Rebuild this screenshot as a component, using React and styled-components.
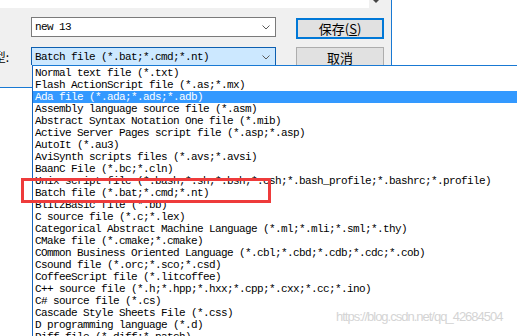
import styled, { createGlobalStyle } from "styled-components";

const Global = createGlobalStyle`
  html, body {
    margin: 0;
    padding: 0;
    background: #fff;
  }
`;

const Page = styled.div`
  position: relative;
  width: 517px;
  height: 336px;
  overflow: hidden;
  background: #fff;
  display: flex;
  flex-direction: column;
`;

const Top = styled.div`
  display: flex;
  height: 65px;
  flex-shrink: 0;
`;

const Dialog = styled.div`
  width: 391px;
  height: 65px;
  background: #f0f0f0;
  border-right: 1px solid #1979d3;
  overflow: hidden;
  display: flex;
  flex-direction: column;
`;

const ScrollEdge = styled.div`
  height: 8px;
  display: flex;
  align-items: flex-start;
  gap: 4px;
`;

const WhiteBar = styled.div`
  width: 369px;
  height: 8px;
  background: #fff;
`;

const FieldRow = styled.div`
  display: flex;
  align-items: flex-start;
  margin-top: ${(p) => p.$top}px;
`;

const Label = styled.div`
  width: 9px;
  margin-right: 22px;
  height: 19px;
  display: flex;
  justify-content: flex-end;
  align-items: center;
  overflow: hidden;
  white-space: nowrap;
  font: 12px "Noto Sans CJK SC", sans-serif;
  color: #000;
`;

const Combo = styled.div`
  box-sizing: border-box;
  width: 245px;
  height: 20px;
  display: flex;
  align-items: center;
  justify-content: space-between;
  padding: 0 5px 0 3px;
  background: ${(p) => (p.$focus ? "#cce8ff" : "#fff")};
  border: 1px solid ${(p) => (p.$focus ? "#0d5fb0" : "#7a7a7a")};
  font: 11px "Liberation Mono", monospace;
  letter-spacing: -0.6px;
  color: #000;
`;

const Button = styled.div`
  box-sizing: border-box;
  width: 88px;
  height: ${(p) => (p.$primary ? 21 : 20)}px;
  margin-left: 20px;
  margin-top: ${(p) => p.$offset || 0}px;
  display: flex;
  align-items: center;
  justify-content: center;
  background: #e1e1e1;
  border: ${(p) => (p.$primary ? "2px solid #0078d7" : "1px solid #adadad")};
  border-bottom-width: ${(p) => (p.$primary ? "2px" : "0")};
  font: 13px "Noto Sans CJK SC", sans-serif;
  color: #000;
  flex-shrink: 0;
`;

const Body = styled.div`
  display: flex;
  flex: 1;
  min-height: 0;
`;

const LeftStrip = styled.div`
  width: 32px;
  flex-shrink: 0;
  display: flex;
  flex-direction: column;
`;

const StripGray = styled.div`
  height: 22px;
  background: #f0f0f0;
  border-bottom: 1px solid #1979d3;
`;

const List = styled.ul`
  flex: 1;
  margin: 0;
  padding: 1px 0 0;
  list-style: none;
  border-top: 1px solid #1979d3;
  border-left: 1px solid #1565c0;
  background: #fff;
`;

const Item = styled.li`
  height: 12px;
  line-height: 12px;
  padding-left: 2px;
  white-space: nowrap;
  font: 11px/12px "Liberation Mono", monospace;
  letter-spacing: -0.6px;
  color: ${(p) => (p.$selected ? "#fff" : "#000")};
  background: ${(p) => (p.$selected ? "#3399ff" : "transparent")};
`;

const Marker = styled.div`
  position: absolute;
  left: 21px;
  top: 178px;
  width: 250px;
  height: 25px;
  box-sizing: border-box;
  border: 3px solid #ee3b3b;
`;

const Watermark = styled.div`
  position: absolute;
  left: 336px;
  top: 309px;
  font: 13px "Liberation Sans", Arial, sans-serif;
  letter-spacing: -1px;
  color: #d4d4d4;
  white-space: nowrap;
`;

const Chevron = () => (
  <svg width="8" height="5" viewBox="0 0 8 5">
    <path d="M0.5 0.5 L4 4 L7.5 0.5" fill="none" stroke="#5a5a5a" strokeWidth="1" />
  </svg>
);

const TinyArrow = () => (
  <svg width="6" height="4" viewBox="0 0 6 4">
    <path d="M0 0 H6 L3 3 Z" fill="#444" />
  </svg>
);

const types = [
  "Normal text file (*.txt)",
  "Flash ActionScript file (*.as;*.mx)",
  "Ada file (*.ada;*.ads;*.adb)",
  "Assembly language source file (*.asm)",
  "Abstract Syntax Notation One file (*.mib)",
  "Active Server Pages script file (*.asp;*.asp)",
  "AutoIt (*.au3)",
  "AviSynth scripts files (*.avs;*.avsi)",
  "BaanC File (*.bc;*.cln)",
  "Unix script file (*.bash;*.sh;*.bsh;*.csh;*.bash_profile;*.bashrc;*.profile)",
  "Batch file (*.bat;*.cmd;*.nt)",
  "BlitzBasic file (*.bb)",
  "C source file (*.c;*.lex)",
  "Categorical Abstract Machine Language (*.ml;*.mli;*.sml;*.thy)",
  "CMake file (*.cmake;*.cmake)",
  "COmmon Business Oriented Language (*.cbl;*.cbd;*.cdb;*.cdc;*.cob)",
  "Csound file (*.orc;*.sco;*.csd)",
  "CoffeeScript file (*.litcoffee)",
  "C++ source file (*.h;*.hpp;*.hxx;*.cpp;*.cxx;*.cc;*.ino)",
  "C# source file (*.cs)",
  "Cascade Style Sheets File (*.css)",
  "D programming language (*.d)",
  "Diff file (*.diff;*.patch)",
];

export default function App() {
  return (
    <Page>
      <Global />
      <Top>
        <Dialog>
          <ScrollEdge>
            <WhiteBar />
            <TinyArrow />
          </ScrollEdge>
          <FieldRow $top={9}>
            <Label />
            <Combo>
              <span>new 13</span>
              <Chevron />
            </Combo>
            <Button $primary $offset={1}>
              保存(<u>S</u>)
            </Button>
          </FieldRow>
          <FieldRow $top={8}>
            <Label>类型:</Label>
            <Combo $focus>
              <span>Batch file (*.bat;*.cmd;*.nt)</span>
              <Chevron />
            </Combo>
            <Button>取消</Button>
          </FieldRow>
        </Dialog>
      </Top>
      <Body>
        <LeftStrip>
          <StripGray />
        </LeftStrip>
        <List>
          {types.map((t, i) => (
            <Item key={t} $selected={i === 2}>
              {t}
            </Item>
          ))}
        </List>
      </Body>
      <Marker />
      <Watermark>https://blog.csdn.net/qq_42684504</Watermark>
    </Page>
  );
}
